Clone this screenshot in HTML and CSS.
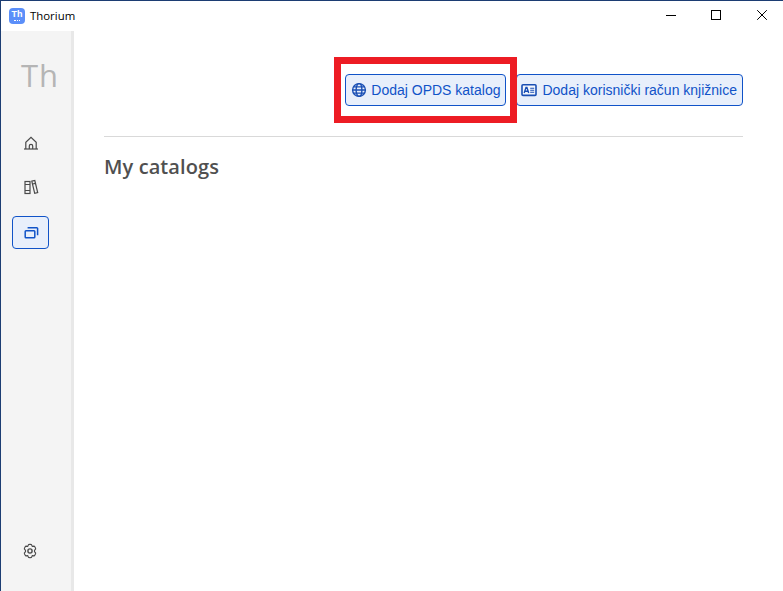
FILE: index.html
```html
<!DOCTYPE html>
<html lang="hr">
<head>
<meta charset="utf-8">
<title>Thorium</title>
<link rel="stylesheet" href="styles.css">
</head>
<body>
<div class="window">
  <header class="titlebar">
    <div class="app-title">
      <span class="app-icon">Th</span>
      <span class="app-name">Thorium</span>
    </div>
    <div class="win-controls">
      <span class="win-btn win-min"><svg width="10" height="10" viewBox="0 0 10 10"><path d="M0 5.5h10" stroke="#000" fill="none"/></svg></span>
      <span class="win-btn win-max"><svg width="10" height="10" viewBox="0 0 10 10"><rect x=".5" y=".5" width="9" height="9" stroke="#000" fill="none"/></svg></span>
      <span class="win-btn win-close"><svg width="10" height="10" viewBox="0 0 10 10"><path d="M.2.2l9.6 9.6M9.8.2L.2 9.8" stroke="#000" stroke-width="1" fill="none"/></svg></span>
    </div>
  </header>
  <div class="body">
    <nav class="sidebar">
      <div class="logo">Th</div>
      <ul class="nav">
        <li class="nav-item">
          <svg width="16" height="16" viewBox="0 0 16 16" fill="none" stroke="#4a4a4a" stroke-width="1.2"><path d="M1 14h14"/><path d="M2.8 14V7.2L8 2.4l5.2 4.8V14"/><path d="M6.3 14v-3a1.7 1.7 0 0 1 3.4 0v3"/></svg>
        </li>
        <li class="nav-item">
          <svg width="16" height="16" viewBox="0 0 16 16" fill="none" stroke="#4a4a4a" stroke-width="1.2"><rect x="2" y="2.5" width="5" height="12"/><path d="M2 5.5h5M2 11.5h5"/><path d="M8.8 2.2l3-.7 2.9 12-3 .8z"/><path d="M9.5 5l3-.7"/></svg>
        </li>
        <li class="nav-item active">
          <svg width="16" height="16" viewBox="0 0 16 16" fill="none" stroke="#1053c8" stroke-width="1.5"><rect x="2.2" y="5.8" width="9.6" height="7" rx=".8"/><path d="M4.6 2.8h9.2a.8.8 0 0 1 .8.8v6.6"/></svg>
        </li>
      </ul>
      <div class="settings">
        <svg width="16" height="16" viewBox="0 0 16 16" fill="none" stroke="#4a4a4a" stroke-width="1.1" stroke-linejoin="round"><path d="M6.5 1.6L8 1.2l1.5.4.7 1.8 2-.3 1 1.2.5 1.5-1.2 1.5 0 1.4 1.2 1.5-.5 1.5-1 1.2-2-.3-.7 1.8-1.5.4-1.5-.4-.7-1.8-2 .3-1-1.2-.5-1.5 1.2-1.5 0-1.4-1.2-1.5.5-1.5 1-1.2 2 .3z"/><circle cx="8" cy="8" r="2.1" stroke-width="1.4"/></svg>
      </div>
    </nav>
    <main class="content">
      <div class="actions">
        <button class="btn btn-opds">
          <svg width="16" height="16" viewBox="0 0 16 16" fill="none" stroke="#1a4fb4" stroke-width="1.4"><circle cx="8" cy="8" r="6.4"/><ellipse cx="8" cy="8" rx="2.9" ry="6.4"/><path d="M1.6 8h12.8M2.6 4.9h10.8M2.6 11.1h10.8"/></svg>
          <span>Dodaj OPDS katalog</span>
        </button>
        <button class="btn btn-account">
          <svg width="16" height="16" viewBox="0 0 16 16"><rect x="1" y="2.8" width="14" height="10.6" rx="1" fill="#f4f7fd" stroke="#1a4fb4" stroke-width="1.6"/><path d="M3.2 11l1.8-5.6h.9L7.7 11M4 9.2h2.9" fill="none" stroke="#1a4fb4" stroke-width="1.4"/><path d="M9.2 6.2h4M9.2 8.2h4M9.2 10.2h4" stroke="#1a4fb4" stroke-width="1.1"/></svg>
          <span>Dodaj korisnički račun knjižnice</span>
        </button>
      </div>
      <hr class="divider">
      <h1 class="heading">My catalogs</h1>
    </main>
  </div>
  <div class="annotation"></div>
</div>
</body>
</html>
```
FILE: styles.css
```css
* { box-sizing: border-box; }
html, body { margin: 0; height: 100%; }
body { background: #fff; overflow: hidden; }
.window {
  position: relative;
  width: 783px;
  height: 591px;
  border-top: 1px solid #1c3d73;
  border-left: 1px solid #1c3d73;
  display: flex;
  flex-direction: column;
  background: #fff;
}
.titlebar {
  height: 30px;
  flex: none;
  display: flex;
  justify-content: space-between;
  align-items: flex-start;
}
.app-title { display: flex; align-items: center; height: 30px; padding-left: 8px; gap: 5px; }
.app-icon {
  position: relative;
  width: 16px;
  height: 16px;
  border-radius: 4px;
  background: #5b8ff9;
  color: #fff;
  font: 700 9px/13px "Liberation Sans", sans-serif;
  text-align: center;
}
.app-icon::after {
  content: "";
  position: absolute;
  left: 5px;
  bottom: 3px;
  width: 6px;
  border-bottom: 1px dotted #fff;
}
.app-name { font: 11.4px/16px "Open Sans", sans-serif; color: #000; }
.win-controls { display: flex; height: 28px; }
.win-btn { display: flex; align-items: center; padding-left: 18px; }
.win-min { width: 45px; }
.win-max { width: 46px; }
.win-close { width: 44px; }
.body { flex: 1; display: flex; min-height: 0; }
.sidebar {
  width: 73px;
  flex: none;
  background: #f4f4f4;
  border-right: 3px solid #e8e8e8;
  display: flex;
  flex-direction: column;
  align-items: flex-start;
}
.logo {
  margin: 24px 0 0 20px;
  font: 31px/40px "Open Sans", sans-serif;
  letter-spacing: 1px;
  color: #b5b5b5;
}
.nav { list-style: none; margin: 31px 0 0 11px; padding: 0; display: flex; flex-direction: column; gap: 11.5px; }
.nav-item {
  width: 37px;
  height: 33px;
  display: flex;
  align-items: center;
  justify-content: center;
  border: 1px solid transparent;
  border-radius: 4px;
}
.nav-item.active { margin-top: 1px; background: #e8effb; border-color: #1053c8; }
.settings { margin: auto 0 32px 21px; height: 16px; }
.content { flex: 1; padding: 43px 40px 0 30px; min-width: 0; }
.actions { display: flex; justify-content: flex-end; gap: 10px; height: 32px; }
.btn {
  display: flex;
  align-items: center;
  gap: 5px;
  height: 32px;
  padding: 0 5px;
  background: #e8effb;
  border: 1px solid #1053c8;
  border-radius: 4px;
  color: #1053c8;
  font: 14px/16px "Liberation Sans", sans-serif;
  white-space: nowrap;
}
.btn-opds { gap: 4px; }
.btn-account { padding-left: 4px; }
.divider { margin: 30px 0 0; border: 0; border-top: 1px solid #d9d9d9; }
.heading {
  margin: 17px 0 0;
  font: 600 20px/26px "Open Sans", sans-serif;
  letter-spacing: .1px;
  color: #505050;
}
.annotation {
  position: absolute;
  left: 333px;
  top: 56px;
  width: 183px;
  height: 66px;
  border: 7px solid #ed1c24;
  pointer-events: none;
}
```
